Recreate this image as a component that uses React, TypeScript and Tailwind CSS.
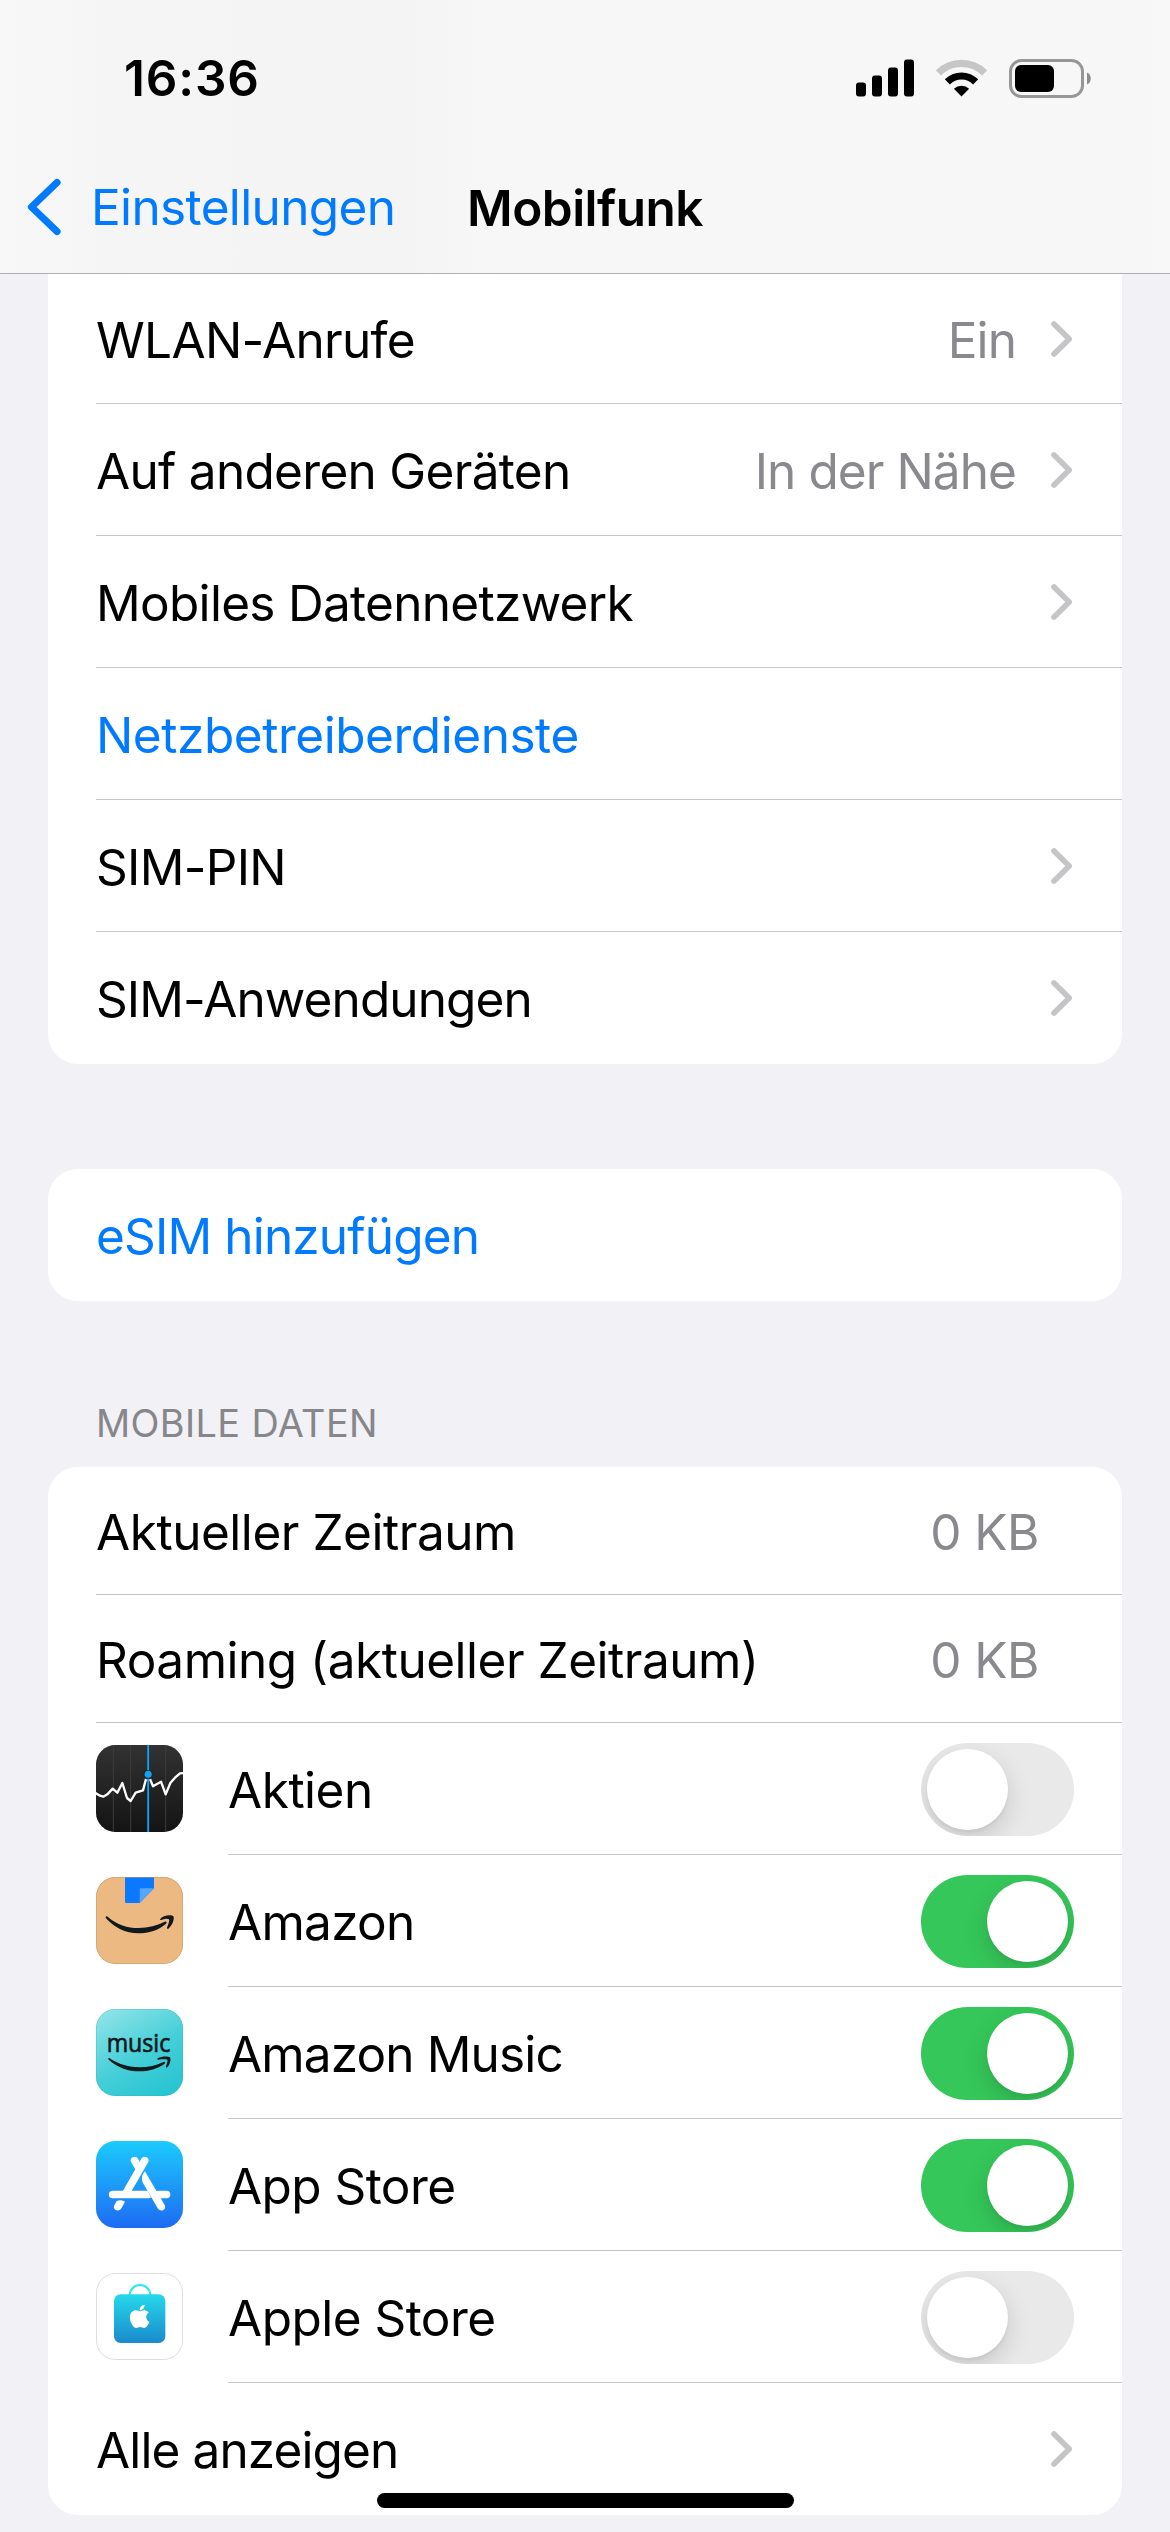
import type { ReactNode } from "react";
import { FaApple } from "react-icons/fa";

function SignalIcon() {
  return (
    <svg width="58" height="38" viewBox="0 0 58 38" fill="#000">
      <rect x="0" y="23.5" width="10" height="14" rx="3" />
      <rect x="16" y="16.5" width="10" height="21" rx="3" />
      <rect x="32" y="8.5" width="10" height="29" rx="3" />
      <rect x="48" y="0.5" width="10" height="37" rx="3" />
    </svg>
  );
}

function WifiIcon() {
  return (
    <svg width="51" height="38" viewBox="0 0 51 38" fill="none">
      <path d="M2.45 13.95 A32.6 32.6 0 0 1 48.55 13.95" stroke="#c6c6c6" strokeWidth="7.2" />
      <path d="M11.35 22.85 A20 20 0 0 1 39.65 22.85" stroke="#000" strokeWidth="7.2" />
      <path d="M25.5 37.5 L17.9 29.7 A11.2 11.2 0 0 1 33.1 29.7 Z" fill="#000" />
    </svg>
  );
}

function BatteryIcon() {
  return (
    <svg width="82" height="39" viewBox="0 0 82 39" fill="none">
      <rect x="1.5" y="1.5" width="72" height="36" rx="11" stroke="#979797" strokeWidth="3" />
      <rect x="6" y="6" width="39" height="27" rx="6" fill="#000" />
      <path d="M78 13.5 C83 15 83 24 78 25.5 Z" fill="#8e8e8e" />
    </svg>
  );
}

function Chevron() {
  return (
    <svg className="shrink-0" width="24" height="38" viewBox="0 0 24 38" fill="none">
      <path d="M4 4 L19.2 19 L4 34" stroke="#c5c5c7" strokeWidth="5.6" strokeLinecap="round" strokeLinejoin="round" />
    </svg>
  );
}

function StocksIcon() {
  return (
    <svg width="87" height="87" viewBox="48 44 261 261">
      <defs>
        <linearGradient id="stocks-bg" x1="0" y1="0" x2="0" y2="1">
          <stop offset="0" stopColor="#323232" />
          <stop offset="1" stopColor="#141414" />
        </linearGradient>
        <clipPath id="stocks-clip">
          <rect x="48" y="44" width="261" height="261" rx="58" />
        </clipPath>
      </defs>
      <g clipPath="url(#stocks-clip)">
        <rect x="48" y="44" width="261" height="261" fill="url(#stocks-bg)" />
        <path d="M100 44V305M152 44V305M257 44V305" stroke="#3d3d3d" strokeWidth="3" />
        <path
          d="M46 188 L60 196 L70 199 L82 192 L98 175 L112 187 L127 158 L141 203 L152 212 L167 187 L189 180 L198 146 L210 146 L219 168 L243 154 L257 192 L271 158 L285 142 L300 129 L311 128"
          fill="none"
          stroke="#fff"
          strokeWidth="7"
          strokeLinejoin="round"
        />
        <circle cx="204.5" cy="132" r="16" fill="#262626" />
        <path d="M204.5 44V305" stroke="#0aa5fb" strokeWidth="5.5" />
        <circle cx="204.5" cy="132" r="13" fill="#262626" />
        <circle cx="204.5" cy="132" r="10.5" fill="#0aa5fb" />
      </g>
    </svg>
  );
}

function AmazonIcon() {
  return (
    <svg width="87" height="87" viewBox="48 51 261 261">
      <defs>
        <clipPath id="amazon-clip">
          <rect x="48" y="51" width="261" height="261" rx="58" />
        </clipPath>
      </defs>
      <g clipPath="url(#amazon-clip)">
        <rect x="48" y="51" width="261" height="261" fill="#ecb982" />
        <path d="M135 51 H222 V85 L179 129 H138 Q135 129 135 126 Z" fill="#0a78ff" />
        <path d="M182 85 H222 L179 129 V88 Q179 85 182 85 Z" fill="#58a4ff" />
        <rect x="49" y="52" width="259" height="259" rx="57" fill="none" stroke="#c39a6c" strokeWidth="2" />
      </g>
      <path
        d="M83 170 C112 195 142 204 175 204 C206 203 232 196 254 185 C259 183 262 188 258 191 C236 211 206 220 175 220 C136 220 103 203 78 175 C75 171 79 167 83 170 Z"
        fill="#10191c"
      />
      <path
        d="M241 177 C249 165 274 163 280 169 C285 178 275 199 265 206 C261 208 260 204 262 200 C266 191 269 181 267 178 C263 174 251 177 244 180 C240 181 239 179 241 177 Z"
        fill="#10191c"
      />
    </svg>
  );
}

function MusicIcon() {
  return (
    <svg width="87" height="87" viewBox="48 42 261 261">
      <defs>
        <linearGradient id="music-bg" x1="0.15" y1="0" x2="0.75" y2="1">
          <stop offset="0" stopColor="#8ee3e8" />
          <stop offset="0.55" stopColor="#46cfd8" />
          <stop offset="1" stopColor="#28c5d2" />
        </linearGradient>
      </defs>
      <rect x="48" y="42" width="261" height="261" rx="58" fill="url(#music-bg)" />
      <rect x="49" y="43" width="259" height="259" rx="57" fill="none" stroke="#3aaab4" strokeOpacity="0.5" strokeWidth="2" />
      <text
        x="80"
        y="171.5"
        fontFamily="'Open Sans', 'Noto Sans', sans-serif"
        fontSize="75"
        textLength="191"
        lengthAdjust="spacingAndGlyphs"
        fill="#0f1a1a"
        stroke="#0f1a1a"
        strokeWidth="2"
      >
        music
      </text>
      <path
        d="M89 190 C118 209 147 217 178 217 C205 217 230 211 250 201 C255 199 258 203 254 206 C234 221 206 229 178 229 C143 229 112 217 86 194 C83 191 86 188 89 190 Z"
        fill="#0f1a1a"
      />
      <path
        d="M233 190 C243 184 263 183 270 187 C274 193 269 211 262 217 C258 219 257 216 258 213 C261 206 264 196 262 194 C258 192 246 193 236 194 C232 194 231 192 233 190 Z"
        fill="#0f1a1a"
      />
    </svg>
  );
}

function AppStoreIcon() {
  return (
    <svg width="87" height="87" viewBox="48 48 261 261">
      <defs>
        <linearGradient id="store-bg" x1="0" y1="0" x2="0" y2="1">
          <stop offset="0" stopColor="#1ccbfd" />
          <stop offset="1" stopColor="#1d6bf3" />
        </linearGradient>
        <mask id="store-gap" maskUnits="userSpaceOnUse" x="48" y="48" width="261" height="261">
          <rect x="48" y="48" width="261" height="261" fill="#fff" />
          <path d="M197 146 L243 246" stroke="#000" strokeWidth="31" strokeLinecap="butt" />
        </mask>
      </defs>
      <rect x="48" y="48" width="261" height="261" rx="58" fill="url(#store-bg)" />
      <g stroke="#fff" strokeWidth="23" strokeLinecap="round" fill="none">
        <path d="M164 107 L178 131" />
        <path d="M194 107 L141 199" />
        <path d="M98 208.5 H205" mask="url(#store-gap)" />
        <path d="M234 208.5 H259.5" />
      </g>
      <path d="M195 139 C186 149 183 162 189 174 L233 250 C242 264 261 254 254 240 Z" fill="#fff" />
      <path d="M110 228 C118 224 128 225 135 230 L124 250 C116 263 96 255 103 241 Z" fill="#fff" />
    </svg>
  );
}

function AppleStoreIcon() {
  return (
    <svg width="87" height="87" viewBox="48 54 261 261">
      <defs>
        <linearGradient id="bag-bg" x1="0" y1="0" x2="0" y2="1">
          <stop offset="0" stopColor="#25d8ea" />
          <stop offset="1" stopColor="#1a8acc" />
        </linearGradient>
      </defs>
      <rect x="49.5" y="55.5" width="258" height="258" rx="57" fill="#fff" stroke="#dedede" strokeWidth="3" />
      <path d="M149 121 A31 31 0 0 1 211 121" fill="none" stroke="#2ce8ef" strokeWidth="6" />
      <rect x="102" y="118" width="154" height="146" rx="20" fill="url(#bag-bg)" />
      <FaApple x={139} y={144} size={80} color="#fff" />
    </svg>
  );
}

function Toggle({ on }: { on: boolean }) {
  return (
    <span
      role="switch"
      aria-checked={on}
      className={
        on
          ? "flex h-[93px] w-[153px] shrink-0 items-center justify-end overflow-hidden rounded-full bg-[#35c759] p-[6px]"
          : "flex h-[93px] w-[153px] shrink-0 items-center justify-start overflow-hidden rounded-full bg-[#e9e9ea] p-[6px]"
      }
    >
      <span className="size-[81px] rounded-full bg-white shadow-[0_9px_24px_rgba(0,0,0,0.15),0_3px_3px_rgba(0,0,0,0.04)]" />
    </span>
  );
}

type RowProps = {
  label: string;
  tracking: string;
  value?: ReactNode;
  link?: boolean;
  chevron?: boolean;
  last?: boolean;
  height?: string;
};

function Row({ label, tracking, value, link, chevron, last, height = "h-[132px]" }: RowProps) {
  return (
    <div className="pl-12">
      <div className={`flex items-center border-[#c6c6c8] pr-12 ${height} ${last ? "" : "border-b"}`}>
        <span className={`flex-1 pt-[2px] ${tracking} ${link ? "text-[#007aff]" : "text-black"}`}>{label}</span>
        {value}
        {chevron && <Chevron />}
      </div>
    </div>
  );
}

function AppRow({ icon, label, tracking, on }: { icon: ReactNode; label: string; tracking: string; on: boolean }) {
  return (
    <div className="flex gap-[45px] pl-12">
      <div className="pt-[22px]">{icon}</div>
      <div className="flex h-[132px] flex-1 border-b border-[#c6c6c8] pt-5 pr-12">
        <span className={`flex-1 pt-[17px] ${tracking}`}>{label}</span>
        <Toggle on={on} />
      </div>
    </div>
  );
}

export default function App() {
  return (
    <div className="relative h-[2532px] w-[1170px] overflow-hidden bg-[#f2f1f6] font-['Inter','Liberation_Sans',sans-serif] text-[49.5px] leading-[60px] whitespace-nowrap text-black">
      <header className="h-[274px] border-b border-[#b0b0b2] bg-[linear-gradient(90deg,#f8f8f8_0px,#f5f5f5_110px,#f4f4f4_400px,#f7f7f7_500px,#f7f7f7_1120px,#f8f8f8_1170px)]">
        <div className="flex h-[141px] items-center justify-between pt-[15px] pr-[79px] pl-[124px]">
          <span className="font-semibold tracking-[0.86px]">16:36</span>
          <div className="flex items-center gap-[22px]">
            <SignalIcon />
            <WifiIcon />
            <BatteryIcon />
          </div>
        </div>
        <nav className="grid h-[132px] grid-cols-[1fr_auto_1fr] items-center">
          <div className="flex items-center pl-[27px] text-[#007aff]">
            <svg width="34" height="58" viewBox="0 0 34 58" fill="none">
              <path d="M30 4.5 L4.5 29 L30 53.5" stroke="#007aff" strokeWidth="7.2" strokeLinecap="round" strokeLinejoin="round" />
            </svg>
            <span className="ml-[30px] tracking-[-0.64px]">Einstellungen</span>
          </div>
          <h1 className="pt-[2px] font-semibold tracking-[-0.52px]">Mobilfunk</h1>
          <div />
        </nav>
      </header>

      <main className="px-12">
        <section className="rounded-b-[30px] bg-white">
          <Row
            label="WLAN-Anrufe"
            tracking="tracking-[-0.68px]"
            value={<span className="mr-[34px] pt-[2px] tracking-[-0.9px] text-[#8a8a8e]">Ein</span>}
            height="h-[130px]"
            chevron
          />
          <Row
            label="Auf anderen Geräten"
            tracking="tracking-[-0.7px]"
            value={<span className="mr-[34px] pt-[2px] tracking-[-0.92px] text-[#8a8a8e]">In der Nähe</span>}
            chevron
          />
          <Row label="Mobiles Datennetzwerk" tracking="tracking-[-0.7px]" chevron />
          <Row label="Netzbetreiberdienste" tracking="tracking-[-0.45px]" link />
          <Row label="SIM-PIN" tracking="tracking-[-0.7px]" chevron />
          <Row label="SIM-Anwendungen" tracking="tracking-[-0.9px]" chevron last />
        </section>

        <section className="mt-[105px] rounded-[30px] bg-white">
          <Row label="eSIM hinzufügen" tracking="tracking-[-0.84px]" link last />
        </section>

        <h2 className="flex h-[166px] items-end pb-5 pl-12 text-[37.8px] leading-[48px] tracking-[0.4px] text-[#86868b]">
          MOBILE DATEN
        </h2>

        <section className="rounded-[30px] bg-white">
          <Row
            label="Aktueller Zeitraum"
            tracking="tracking-[-0.46px]"
            value={<span className="mr-[35px] pt-[2px] tracking-[-0.5px] text-[#8a8a8e]">0 KB</span>}
            height="h-32"
          />
          <Row
            label="Roaming (aktueller Zeitraum)"
            tracking="tracking-[-0.48px]"
            value={<span className="mr-[35px] pt-[2px] tracking-[-0.5px] text-[#8a8a8e]">0 KB</span>}
            height="h-32"
          />
          <AppRow icon={<StocksIcon />} label="Aktien" tracking="tracking-[-0.47px]" on={false} />
          <AppRow icon={<AmazonIcon />} label="Amazon" tracking="tracking-[-0.72px]" on />
          <AppRow icon={<MusicIcon />} label="Amazon Music" tracking="tracking-[-0.86px]" on />
          <AppRow icon={<AppStoreIcon />} label="App Store" tracking="tracking-[-0.55px]" on />
          <AppRow icon={<AppleStoreIcon />} label="Apple Store" tracking="tracking-[-0.52px]" on={false} />
          <Row label="Alle anzeigen" tracking="tracking-[-0.88px]" chevron last />
        </section>
      </main>

      <div className="absolute bottom-[24px] left-[377px] h-[15px] w-[417px] rounded-full bg-black" />
    </div>
  );
}
